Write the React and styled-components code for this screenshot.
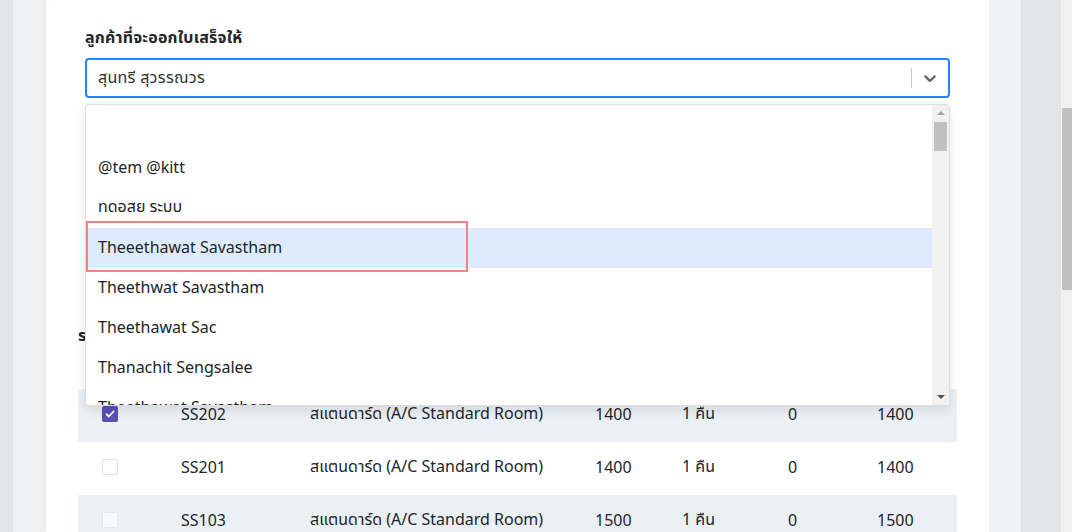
import React from "react";
import styled, { createGlobalStyle } from "styled-components";

const Global = createGlobalStyle`
  html, body { margin: 0; padding: 0; }
  body {
    width: 1072px; height: 532px; overflow: hidden;
    font-family: "Noto Sans", "Noto Sans Thai", "Roboto", sans-serif;
    color: #212529;
  }
  * { box-sizing: border-box; }
`;

const Screen = styled.div`
  display: flex;
  height: 532px;
  width: 1072px;
  overflow: hidden;
`;

const Strip = styled.div`
  width: ${(p) => p.$w}px;
  flex: none;
  background: ${(p) => p.$bg};
`;

const Card = styled.div`
  width: 943px;
  flex: none;
  background: #ffffff;
  border-radius: 7px 7px 0 0;
  box-shadow: 0 0 6px rgba(0, 0, 0, 0.04);
  padding-top: 25px;
  display: flex;
  flex-direction: column;
`;

const Field = styled.div`
  padding: 0 39px;
`;

const Label = styled.div`
  font-weight: 700;
  font-size: 16px;
  line-height: 24px;
  margin-bottom: 9px;
  letter-spacing: 0.2px;
`;

const SelectWrap = styled.div`
  position: relative;
`;

const Control = styled.div`
  height: 40px;
  border: 2px solid #2684ff;
  border-radius: 4px;
  display: flex;
  align-items: center;
  background: #fff;
`;

const Value = styled.div`
  flex: 1;
  padding: 0 11px;
  font-size: 16px;
  color: #333;
  letter-spacing: 0.3px;
`;

const Separator = styled.span`
  width: 1px;
  align-self: stretch;
  margin: 8px 0;
  background: #cccccc;
`;

const Indicator = styled.div`
  width: 36px;
  display: flex;
  align-items: center;
  justify-content: center;
  color: #666;
`;

const Menu = styled.div`
  position: absolute;
  top: calc(100% + 6px);
  left: 0;
  right: 0;
  height: 302px;
  background: #fff;
  border: 1px solid #dedede;
  border-radius: 4px;
  box-shadow: 0 4px 11px rgba(0, 0, 0, 0.1);
  display: flex;
  overflow: hidden;
  z-index: 5;
`;

const Viewport = styled.div`
  flex: 1;
  overflow: hidden;
  padding-top: 3px;
`;

const Option = styled.div`
  height: 40px;
  padding: 0 12px 2px;
  display: flex;
  align-items: center;
  font-size: 16px;
  color: #212529;
  background: ${(p) => (p.$focused ? "#deebff" : "transparent")};
  white-space: pre;
`;

const MenuScroll = styled.div`
  width: 17px;
  flex: none;
  background: #f1f1f1;
  display: flex;
  flex-direction: column;
  align-items: center;
`;

const Arrow = styled.div`
  width: 0;
  height: 0;
  border-left: 4px solid transparent;
  border-right: 4px solid transparent;
  ${(p) =>
    p.$up
      ? `border-bottom: 4px solid #a3a3a3; margin-top: 6px;`
      : `border-top: 4px solid #505050; margin-bottom: 6px;`}
`;

const MenuThumb = styled.div`
  width: 13px;
  height: 29px;
  margin-top: 7px;
  background: #c1c1c1;
`;

const Grow = styled.div`
  flex: 1;
`;

const Annotation = styled.div`
  position: absolute;
  left: 0;
  top: 116px;
  width: 382px;
  height: 51px;
  border: 2px solid #ef8585;
  pointer-events: none;
`;

const Section = styled.div`
  margin: 225px 32px 0;
`;

const Heading = styled.div`
  font-weight: 700;
  font-size: 16px;
  line-height: 24px;
  margin-bottom: 42px;
`;

const Row = styled.div`
  height: 53px;
  display: grid;
  grid-template-columns: 79px 129px 285px 87px 106px 89px 1fr;
  align-items: center;
  padding: 0 0 3px 24px;
  font-size: 16px;
  color: #212529;
  background: ${(p) => (p.$shade ? "#ebf0f5" : "#ffffff")};
`;

const Check = styled.span`
  width: 16px;
  height: 16px;
  border-radius: 2px;
  display: flex;
  align-items: center;
  justify-content: center;
  background: ${(p) => (p.$on ? "#5b4fb3" : "#fff")};
  border: ${(p) => (p.$on ? "none" : "1.5px solid #dfe3e8")};
  opacity: ${(p) => (p.$dim ? 0.6 : 1)};
`;

const PageScroll = styled.div`
  width: 11px;
  flex: none;
  background: #f1f1f1;
  padding-top: 108px;
`;

const PageThumb = styled.div`
  margin-left: 1px;
  height: 182px;
  background: #c1c1c1;
`;

const options = [
  " ",
  "@tem @kitt",
  "ทดอสย ระบบ",
  "Theeethawat Savastham",
  "Theethwat Savastham",
  "Theethawat Sac",
  "Thanachit Sengsalee",
  "Theethawat Savastham",
];

const rows = [
  { on: true, code: "SS202", price: "1400", total: "1400" },
  { on: false, code: "SS201", price: "1400", total: "1400" },
  { on: false, code: "SS103", price: "1500", total: "1500", dim: true },
];

function Chevron() {
  return (
    <svg width="20" height="20" viewBox="0 0 20 20" fill="currentColor">
      <path d="M4.516 7.548c0.436-0.446 1.043-0.481 1.576 0l3.908 3.747 3.908-3.747c0.533-0.481 1.141-0.446 1.574 0 0.436 0.445 0.408 1.197 0 1.615-0.406 0.418-4.695 4.502-4.695 4.502-0.217 0.223-0.502 0.335-0.787 0.335s-0.57-0.112-0.789-0.335c0 0-4.287-4.084-4.695-4.502s-0.436-1.17 0-1.615z" />
    </svg>
  );
}

function Tick() {
  return (
    <svg width="12" height="12" viewBox="0 0 12 12" fill="none">
      <path d="M2.5 6.2l2.3 2.3 4.7-5" stroke="#fff" strokeWidth="1.8" strokeLinecap="round" strokeLinejoin="round" />
    </svg>
  );
}

export default function App() {
  return (
    <>
      <Global />
      <Screen>
        <Strip $w={13} $bg="#e4e5e9" />
        <Strip $w={33} $bg="#eff0f2" />
        <Card>
          <Field>
            <Label>ลูกค้าที่จะออกใบเสร็จให้</Label>
            <SelectWrap>
              <Control>
                <Value>สุนทรี สุวรรณวร</Value>
                <Separator />
                <Indicator>
                  <Chevron />
                </Indicator>
              </Control>
              <Menu>
                <Viewport>
                  {options.map((o, i) => (
                    <Option key={i} $focused={i === 3}>
                      {o}
                    </Option>
                  ))}
                </Viewport>
                <MenuScroll>
                  <Arrow $up />
                  <MenuThumb />
                  <Grow />
                  <Arrow />
                </MenuScroll>
                <Annotation />
              </Menu>
            </SelectWrap>
          </Field>
          <Section>
            <Heading>รายการห้องพัก</Heading>
            {rows.map((r, i) => (
              <Row key={r.code} $shade={i % 2 === 0}>
                <Check $on={r.on} $dim={r.dim}>
                  {r.on && <Tick />}
                </Check>
                <span>{r.code}</span>
                <span>สแตนดาร์ด (A/C Standard Room)</span>
                <span>{r.price}</span>
                <span>1 คืน</span>
                <span>0</span>
                <span>{r.total}</span>
              </Row>
            ))}
          </Section>
        </Card>
        <Strip $w={32} $bg="#f1f2f4" />
        <Strip $w={40} $bg="#e3e4e8" />
        <PageScroll>
          <PageThumb />
        </PageScroll>
      </Screen>
    </>
  );
}
